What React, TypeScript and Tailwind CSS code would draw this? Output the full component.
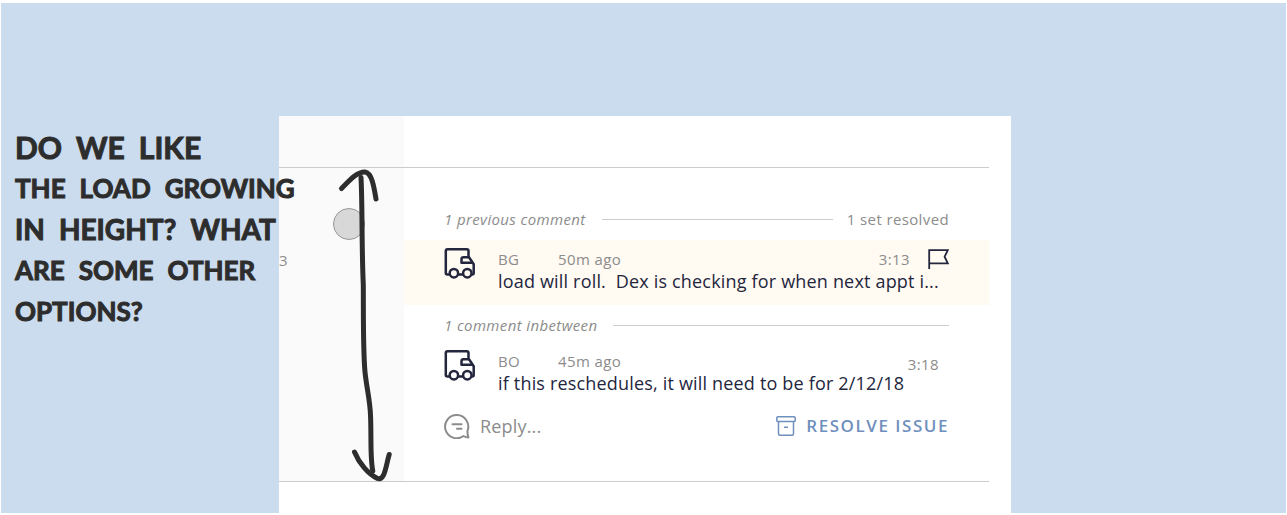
import type { ReactNode } from "react";

const noteLines = [
  { words: ["DO", "WE", "LIKE"], size: "text-[30px]" },
  { words: ["THE", "LOAD", "GROWING"], size: "text-[26px]" },
  { words: ["IN", "HEIGHT?", "WHAT"], size: "text-[28px]" },
  { words: ["ARE", "SOME", "OTHER"], size: "text-[26px]" },
  { words: ["OPTIONS?"], size: "text-[26px]" },
];

function TruckIcon() {
  return (
    <svg className="h-8 w-8 shrink-0" viewBox="0 0 32 32" fill="none" stroke="#23263d" strokeWidth="2.5" strokeLinejoin="round" aria-hidden="true">
      <path d="M5.500 26.500H3.500Q1.800 26.500 1.800 25V3Q1.800 1.300 3.500 1.300H22.800Q24.500 1.300 24.500 3V8.500L29.700 16.200V25Q29.700 26.500 28.200 26.500H27.500" />
      <path d="M14 26.500H19M24.500 9.300H19.500Q17.500 9.300 17.500 11.300V14.700H28.500" />
      <circle cx="9.900" cy="25.200" r="4.200" />
      <circle cx="23.300" cy="25.200" r="4.200" />
    </svg>
  );
}

function FlagIcon() {
  return (
    <svg className="h-5 w-[21px]" viewBox="0 0 21 20" fill="none" stroke="#23263d" strokeWidth="1.8" aria-hidden="true">
      <path d="M1.200 20V1.200H19.800L16.600 7.700L19.800 14.300H1.200" />
    </svg>
  );
}

function ReplyIcon() {
  return (
    <svg className="h-[26px] w-[26px]" viewBox="0 0 26 26" fill="none" stroke="#8c8c8c" strokeWidth="2" strokeLinecap="round" strokeLinejoin="round" aria-hidden="true">
      <path d="M19.500 23A11.600 11.600 0 1 1 23.500 17.800Q23.300 21 24.400 24.500Q22 24.500 19.500 23Z" />
      <path d="M8.500 11.200H17.500M13 15.700H17.500" />
    </svg>
  );
}

function ArchiveIcon() {
  return (
    <svg className="h-5 w-5" viewBox="0 0 20 20" fill="none" stroke="#6f8fbe" strokeWidth="1.500" strokeLinejoin="round" aria-hidden="true">
      <rect x=".8" y=".8" width="18.400" height="4.800" rx="1.200" />
      <path d="M2.500 5.800V17.700Q2.500 19.200 4 19.200H16Q17.500 19.200 17.500 17.700V5.800M8 11.300H12" />
    </svg>
  );
}

function ThreadDivider({ label, end }: { label: string; end?: string }) {
  return (
    <div className="flex h-5 items-center px-10 text-[15px] leading-5 tracking-wide text-[#8c8c8c]">
      <button type="button" className="italic">{label}</button>
      <span className="ml-4 h-px flex-1 bg-[#cccccc]" />
      {end && <span className="ml-3.5">{end}</span>}
    </div>
  );
}

type CommentProps = {
  author: string;
  age: string;
  message: string;
  children: ReactNode;
  highlighted?: boolean;
};

function Comment({ author, age, message, children, highlighted }: CommentProps) {
  return (
    <article className={highlighted ? "flex h-[65px] bg-[#fffaf2] px-10 pt-2" : "flex h-[65px] px-10 pt-2"}>
      <TruckIcon />
      <div className="ml-[22px] min-w-0 flex-1">
        <div className="flex h-[21px] items-center text-[15px] leading-5 tracking-wide text-[#8c8c8c]">
          <span className="w-[60px]">{author}</span>
          <span className="flex-1">{age}</span>
          {children}
        </div>
        <p className="whitespace-pre text-lg leading-6 tracking-[0.01em] text-[#23263d]">{message}</p>
      </div>
    </article>
  );
}

export default function App() {
  return (
    <div className="min-h-screen bg-white px-px pt-[3px] pb-0.5 font-['Open_Sans',sans-serif]">
      <main className="relative flex min-h-[calc(100vh-5px)] bg-[#cbdcee]">
        <aside className="z-10 w-[278px] shrink-0 pt-[124px] pl-3.5 font-['Lato',sans-serif] leading-[41px] font-bold text-[#2d2d2d] [-webkit-text-stroke:1px_#2d2d2d]">
          {noteLines.map(({ words, size }) => (
            <p key={words.join("-")} className="flex gap-3.5 whitespace-nowrap">
              {words.map((word) => (
                <span key={word} className={size}>{word}</span>
              ))}
            </p>
          ))}
        </aside>

        <section className="mt-[113px] flex max-w-[732px] flex-1 flex-col bg-white pr-[22px]">
          <div className="flex h-[52px] border-b border-[#cccccc]">
            <div className="w-[125px] bg-[#fafafa]" />
          </div>
          <div className="flex border-b border-[#cccccc]">
            <div className="w-[125px] shrink-0 bg-[#fafafa] pt-10">
              <div className="ml-[54px] h-8 w-8 rounded-full border border-[#979797] bg-[#d8d8d8]" />
              <div className="mt-2.5 text-[15px] leading-5 text-[#8c8c8c]">3</div>
            </div>
            <div className="min-w-0 flex-1 pt-[41px] pb-[42px]">
              <ThreadDivider label="1 previous comment" end="1 set resolved" />
              <div className="mt-[11px] mb-2.5">
                <Comment author="BG" age="50m ago" message="load will roll.  Dex is checking for when next appt i..." highlighted>
                  <span className="mr-[18px]">3:13</span>
                  <FlagIcon />
                </Comment>
              </div>
              <ThreadDivider label="1 comment inbetween" />
              <div className="mt-[7px]">
                <Comment author="BO" age="45m ago" message="if this reschedules, it will need to be for 2/12/18">
                  <span className="mr-2.5 pt-1.5">3:18</span>
                </Comment>
              </div>
              <div className="mt-1.5 flex h-[26px] items-center px-10">
                <label htmlFor="reply" aria-label="Reply">
                  <ReplyIcon />
                </label>
                <input id="reply" type="text" placeholder="Reply..." className="ml-2.5 min-w-0 flex-1 bg-transparent text-lg leading-6 tracking-[0.01em] outline-none placeholder:text-[#8c8c8c]" />
                <button type="button" className="flex items-center gap-2.5 text-[17px] leading-6 font-semibold tracking-[0.09em] text-[#6f8fbe]">
                  <ArchiveIcon />
                  RESOLVE ISSUE
                </button>
              </div>
            </div>
          </div>
        </section>

        <svg className="pointer-events-none absolute top-[162px] left-[334px] h-[320px] w-[60px]" viewBox="335 165 60 320" fill="none" stroke="#2d2d2d" strokeWidth="5" strokeLinecap="round" strokeLinejoin="round" aria-hidden="true">
          <path d="M341.500 188.500C349 181 357 171.500 365 172C372 173 374 187 376 199" />
          <path d="M361 177.500C362.500 205 361.500 245 363.300 285C363.500 320 363 350 365 372C366.500 387 370 400 370.500 415C371.500 438 370 458 372.800 471" />
          <path d="M354.500 452C359 463 368 474 377.500 478.500C385 481 386 465 389.200 454.500" />
        </svg>
      </main>
    </div>
  );
}
